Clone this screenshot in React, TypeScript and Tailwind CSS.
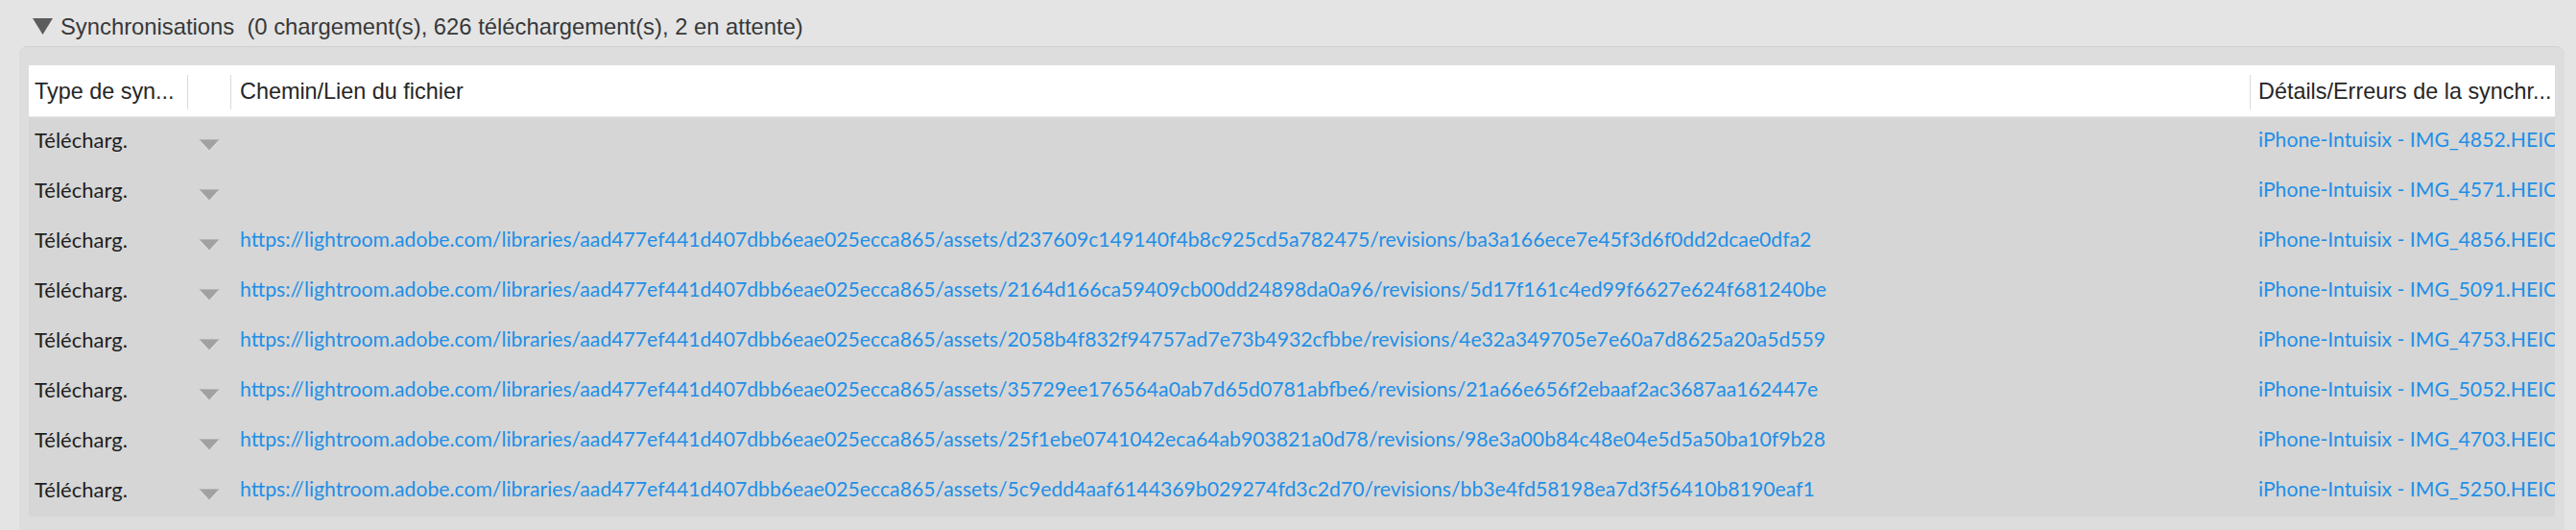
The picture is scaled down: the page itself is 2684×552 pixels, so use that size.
import React from 'react';

const BASE = 'https://lightroom.adobe.com/libraries/aad477ef441d407dbb6eae025ecca865/assets/';

const ROWS: { url: string; file: string }[] = [
  { url: '', file: 'iPhone-Intuisix - IMG_4852.HEIC' },
  { url: '', file: 'iPhone-Intuisix - IMG_4571.HEIC' },
  { url: BASE + 'd237609c149140f4b8c925cd5a782475/revisions/ba3a166ece7e45f3d6f0dd2dcae0dfa2', file: 'iPhone-Intuisix - IMG_4856.HEIC' },
  { url: BASE + '2164d166ca59409cb00dd24898da0a96/revisions/5d17f161c4ed99f6627e624f681240be', file: 'iPhone-Intuisix - IMG_5091.HEIC' },
  { url: BASE + '2058b4f832f94757ad7e73b4932cfbbe/revisions/4e32a349705e7e60a7d8625a20a5d559', file: 'iPhone-Intuisix - IMG_4753.HEIC' },
  { url: BASE + '35729ee176564a0ab7d65d0781abfbe6/revisions/21a66e656f2ebaaf2ac3687aa162447e', file: 'iPhone-Intuisix - IMG_5052.HEIC' },
  { url: BASE + '25f1ebe0741042eca64ab903821a0d78/revisions/98e3a00b84c48e04e5d5a50ba10f9b28', file: 'iPhone-Intuisix - IMG_4703.HEIC' },
  { url: BASE + '5c9edd4aaf6144369b029274fd3c2d70/revisions/bb3e4fd58198ea7d3f56410b8190eaf1', file: 'iPhone-Intuisix - IMG_5250.HEIC' },
];

const GRID = 'grid grid-cols-[165px_45px_1fr_318px]';

function RowArrow() {
  return (
    <svg width="24" height="15" viewBox="0 0 24 15">
      <polygon points="2,3 22,3 12,14" fill="#f2f2f2" opacity="0.6" />
      <polygon points="2,1.5 22,1.5 12,12.5" fill="#a1a1a1" stroke="#b5b5b5" strokeWidth="1" />
    </svg>
  );
}

function HeadCell({ label, divider, pad }: { label?: string; divider?: boolean; pad: string }) {
  return (
    <div className="flex items-center h-full min-w-0 overflow-hidden">
      {divider && <div className="w-px h-[36px] bg-[#dadada] shrink-0" />}
      {label && <span className={`${pad} whitespace-nowrap`}>{label}</span>}
    </div>
  );
}

export default function App() {
  return (
    <div className="w-[2684px] h-[552px] overflow-hidden bg-[#e4e4e4] flex flex-col font-['Liberation_Sans',Arial,sans-serif]">
      {/* Section title */}
      <div className="h-[48px] flex items-center pl-[34px] pt-[7px] shrink-0">
        <svg width="21" height="17" viewBox="0 0 21 17" className="shrink-0">
          <polygon points="0,0 21,0 10.5,17" fill="#5c5c5c" />
        </svg>
        <span className="ml-[8px] text-[23.8px] text-[#383838] whitespace-pre">Synchronisations  (0 chargement(s), 626 téléchargement(s), 2 en attente)</span>
      </div>

      {/* Panel */}
      <div className="ml-[20px] mr-[12px] flex-1 rounded-t-[9px] bg-[#dddddd] border-t border-[#d1d1d1] pt-[19px] px-[10px]">
        <div className={`${GRID} h-[54px] bg-white border-b border-[#e9e9e9] text-[23.4px] text-[#262626] pt-[2px]`}>
          <HeadCell label="Type de syn..." pad="pl-[6px]" />
          <HeadCell divider pad="" />
          <HeadCell label="Chemin/Lien du fichier" divider pad="pl-[9px]" />
          <HeadCell label="Détails/Erreurs de la synchr..." divider pad="pl-[8px]" />
        </div>
        <div className="bg-[#d6d6d6]">
          {ROWS.map((r, i) => (
            <div key={i} className={`${GRID} h-[52px] font-['Lato',sans-serif]`}>
              <div className="flex items-center pl-[6px] pb-[5px] text-[#1e1e1e] text-[22px]">Télécharg.</div>
              <div className="flex items-center justify-center pt-[6px]">
                <RowArrow />
              </div>
              <div className="flex items-center pl-[10px] pb-[5px] min-w-0 overflow-hidden whitespace-nowrap text-[#1f8fe6] text-[21.2px]">{r.url}</div>
              <div className="flex items-center pl-[9px] pb-[5px] min-w-0 overflow-hidden whitespace-nowrap text-[#1f8fe6] text-[21.2px]">{r.file}</div>
            </div>
          ))}
        </div>
      </div>
    </div>
  );
}
